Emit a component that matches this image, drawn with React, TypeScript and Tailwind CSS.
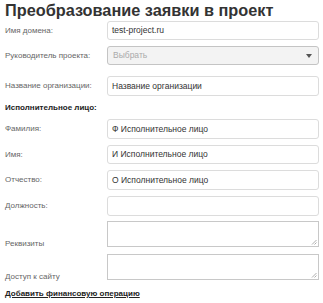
import React from "react";

const font = { fontFamily: '"Liberation Sans", Arial, sans-serif' };

function Label({ children }: { children: React.ReactNode }) {
  return <div className="w-[102px] shrink-0 whitespace-nowrap text-[8px] leading-[12px] text-[#666]">{children}</div>;
}

function Field({ label, value, h = "h-[20px]", mt }: { label: string; value?: string; h?: string; mt: string }) {
  return (
    <div className={`flex items-center ${mt}`}>
      <Label>{label}</Label>
      <div
        className={`w-[212px] ${h} rounded-[3px] border border-[#dcdcdc] bg-white px-[4px] flex items-center text-[8.5px] text-[#333]`}
      >
        {value}
      </div>
    </div>
  );
}

function Area({ label, mt }: { label: string; mt: string }) {
  return (
    <div className={`flex ${mt}`}>
      <div className="w-[102px] shrink-0 self-end whitespace-nowrap text-[8px] leading-[6px] text-[#666]">{label}</div>
      <div className="relative w-[212px] h-[26px] border border-[#c8c8c8] bg-white">
        <svg className="absolute right-[1px] bottom-[1px]" width="6" height="6" viewBox="0 0 6 6">
          <path d="M5.5 1L1 5.5M5.5 3.5L3.5 5.5" stroke="#999" strokeWidth="0.8" />
        </svg>
      </div>
    </div>
  );
}

export default function App() {
  return (
    <div className="w-[323px] h-[303px] bg-white pl-[5px] overflow-hidden" style={font}>
      <h1 className="h-[21px] text-[16.3px] leading-[20px] font-bold text-[#333] whitespace-nowrap">Преобразование заявки в проект</h1>

      <Field label="Имя домена:" value="test-project.ru" h="h-[19px]" mt="mt-0" />

      {/* select */}
      <div className="flex items-center mt-[6px]">
        <Label>Руководитель проекта:</Label>
        <div className="w-[212px] h-[19px] rounded-[3px] border border-[#c4c4c4] bg-[#f3f3f3] px-[5px] flex items-center justify-between text-[8.5px] text-[#aaa]">
          <span>Выбрать</span>
          <svg width="6" height="4" viewBox="0 0 6 4" className="mr-[1px]">
            <path d="M0 0H6L3 4Z" fill="#555" />
          </svg>
        </div>
      </div>

      <Field label="Название организации:" value="Название организации" mt="mt-[11px]" />

      <div className="h-[23px] flex items-center whitespace-nowrap text-[8px] font-bold text-[#222]">Исполнительное лицо:</div>

      <Field label="Фамилия:" value="Ф Исполнительное лицо" mt="mt-0" />
      <Field label="Имя:" value="И Исполнительное лицо" mt="mt-[6px]" h="h-[19px]" />
      <Field label="Отчество:" value="О Исполнительное лицо" mt="mt-[6px]" />
      <Field label="Должность:" mt="mt-[6px]" />

      <Area label="Реквизиты" mt="mt-[5px]" />
      <Area label="Доступ к сайту" mt="mt-[7px]" />

      <div className="mt-[8px] text-[8px] leading-[12px] font-bold text-[#222] underline whitespace-nowrap">Добавить финансовую операцию</div>
    </div>
  );
}
